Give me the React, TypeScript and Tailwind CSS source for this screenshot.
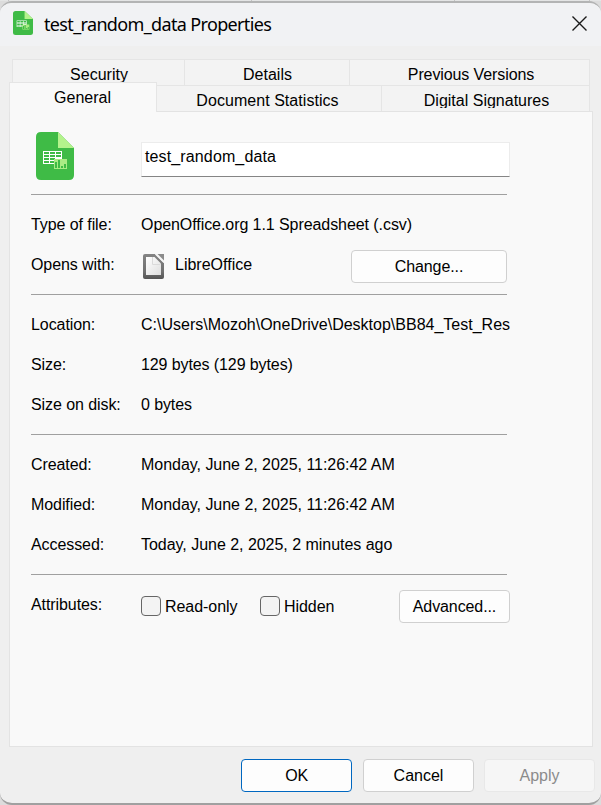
import type { ReactNode } from "react";

function SheetIcon({ className }: { className: string }) {
  return (
    <svg className={className} viewBox="0 0 38 48" preserveAspectRatio="none">
      <path d="M5 0H22L38 16V43Q38 48 33 48H5Q0 48 0 43V5Q0 0 5 0Z" fill="#3fbb46" />
      <path d="M22 0L38 16H22Z" fill="#b4f38c" />
      <path d="M7 19H26V32H7Z" fill="#fff" />
      <path
        d="M8 20h5v2h-5zM14 20h5v2h-5zM20 20h5v2h-5zM8 23h5v2h-5zM14 23h5v2h-5zM20 23h5v2h-5zM8 26h5v2h-5zM14 26h5v2h-5zM8 29h5v2h-5zM14 29h5v2h-5z"
        fill="#3fbb46"
      />
      <path d="M18 27H31V37H18Z" fill="#a9ec84" />
      <path d="M19 30h2v6h-2zM22 28h2v8h-2zM25 34h2v2h-2zM28 32h2v4h-2z" fill="#3fbb46" />
    </svg>
  );
}

function OfficeIcon() {
  return (
    <svg className="block h-[25px] w-[21px] shrink-0" viewBox="0 0 21 25">
      <defs>
        <linearGradient id="frame" x1="0" y1="0" x2="0" y2="1">
          <stop offset="0" stopColor="#858585" />
          <stop offset="0.7" stopColor="#707070" />
          <stop offset="1" stopColor="#545454" />
        </linearGradient>
        <linearGradient id="sheet" x1="0" y1="0" x2="1" y2="1">
          <stop offset="0" stopColor="#ffffff" />
          <stop offset="1" stopColor="#dedede" />
        </linearGradient>
      </defs>
      <path d="M2 0H12L21 9V23Q21 25 19 25H2Q0 25 0 23V2Q0 0 2 0Z" fill="url(#frame)" />
      <path d="M3 3H11.5L18 9.5V21H3Z" fill="url(#sheet)" />
      <path d="M9.5 3V10.5H17.5" fill="none" stroke="#dadada" strokeWidth="1" />
      <path d="M14.5 0H21V6.5Z" fill="#8b8b8b" />
      <path d="M12.5 0L21 8.5" stroke="#f3f3f3" strokeWidth="1.2" />
    </svg>
  );
}

function Tab({ label, className, textClass }: { label: string; className: string; textClass: string }) {
  return (
    <div className={`h-[26px] border-t border-[#e5e5e5] bg-[#f3f3f3] text-center ${className}`}>
      <div className={`h-[22px] overflow-hidden pt-[5px] leading-[19px] ${textClass}`}>{label}</div>
    </div>
  );
}

function Row({ label, children }: { label: string; children: ReactNode }) {
  return (
    <div className="flex h-10 items-center">
      <div className="w-[110px] shrink-0 tracking-[-0.08px]">{label}</div>
      {children}
    </div>
  );
}

function Section({ children }: { children: ReactNode }) {
  return (
    <div className="pb-[9px]">
      <div className="mb-[10px] h-px w-[476px] bg-[#a0a0a0]" />
      {children}
    </div>
  );
}

function Button({ label, className }: { label: string; className: string }) {
  return (
    <button className={`h-[33px] rounded-[4px] border text-center leading-[31px] ${className}`}>
      {label}
    </button>
  );
}

function Check({ label, className }: { label: string; className: string }) {
  return (
    <label className={`flex items-center gap-[4px] pt-[2px] ${className}`}>
      <span className="size-[20px] rounded-[4px] border border-[#666666] bg-[#f3f3f3]" />
      <span className="pt-[2px] tracking-[-0.05px]">{label}</span>
    </label>
  );
}

const dates = [
  ["Created:", "Monday, June 2, 2025, 11:26:42 AM"],
  ["Modified:", "Monday, June 2, 2025, 11:26:42 AM"],
  ["Accessed:", "Today, June 2, 2025, 2 minutes ago"],
];

export default function App() {
  return (
    <div className="h-[805px] w-[601px] overflow-hidden bg-[#dcdcdc] font-['Liberation_Sans',Arial,sans-serif] text-[16px] leading-5 text-black">
      <div className="flex h-px bg-[#e4e5e5] pl-[8px]">
        <div className="w-[244px] border-x border-[#c4c4c4]" />
        <div className="w-[203px] border-r border-[#c4c4c4]" />
        <div className="w-[135px] border-r border-[#c4c4c4]" />
      </div>
      <div className="h-[804px] overflow-hidden rounded-[12px] border-t-2 border-b-2 border-t-[#b3b4b4] border-b-[#a0a0a0] bg-[#efefef]">
        <header className="flex h-[43px] items-center bg-[#f1f2f4] pl-[13px] pr-[13px]">
          <SheetIcon className="mt-[-3px] h-[24px] w-[20px]" />
          <span className="ml-[11px] mt-[-2px] flex-1 font-['Noto_Sans','Segoe_UI',sans-serif] text-[18px] leading-6 tracking-[-0.65px]">
            test_random_data Properties
          </span>
          <svg className="mt-[-3px] size-[17px]" viewBox="0 0 17 17">
            <path d="M1.5 1.5L15.5 15.5M15.5 1.5L1.5 15.5" stroke="#1a1a1a" strokeWidth="1.4" />
          </svg>
        </header>

        <nav className="pt-[13px]">
          <div className="ml-[12px] flex">
            <Tab label="Security" className="w-[172px] border-l" textClass="pl-px" />
            <Tab label="Details" className="w-[165px] border-l" textClass="pl-px" />
            <Tab label="Previous Versions" className="w-[241px] border-x" textClass="pl-[3px] tracking-[-0.1px]" />
          </div>
          <div className="ml-[9px] flex h-[26px]">
            <div className="relative mt-[-3px] h-[30px] w-[148px] border border-b-0 border-[#e5e5e5] bg-[#f9f9f9] pt-[5px] pr-px text-center">
              General
            </div>
            <Tab label="Document Statistics" className="w-[224px]" textClass="pr-[3px] tracking-[0.05px]" />
            <Tab label="Digital Signatures" className="w-[209px] border-x" textClass="pl-[2px]" />
          </div>
        </nav>

        <main className="ml-[9px] h-[636px] w-[584px] border border-[#e3e3e3] bg-[#f9f9f9] pl-[21px]">
          <div className="flex h-[82px] pt-[20px]">
            <SheetIcon className="ml-[5px] h-[48px] w-[38px]" />
            <div className="ml-[67px] mt-[10px] h-[35px] w-[369px] border border-[#ececec] border-b-[#858585] bg-white pl-[3px] pt-[4px] tracking-[0.13px]">
              test_random_data
            </div>
          </div>

          <Section>
            <Row label="Type of file:">
              <span className="tracking-[-0.07px]">OpenOffice.org 1.1 Spreadsheet (.csv)</span>
            </Row>
            <Row label="Opens with:">
              <span className="ml-[2px] mt-[3px]"><OfficeIcon /></span>
              <span className="ml-[11px] w-[176px]">LibreOffice</span>
              <Button label="Change..." className="mt-[2px] w-[156px] border-[#d0d0d0] bg-[#fdfdfd] tracking-[-0.1px]" />
            </Row>
          </Section>

          <Section>
            <Row label="Location:">
              <span className="w-[369px] overflow-hidden whitespace-nowrap">
                C:\Users\Mozoh\OneDrive\Desktop\BB84_Test_Res
              </span>
            </Row>
            <Row label="Size:">
              <span className="tracking-[-0.1px]">129 bytes (129 bytes)</span>
            </Row>
            <Row label="Size on disk:">
              <span className="tracking-[-0.1px]">0 bytes</span>
            </Row>
          </Section>

          <Section>
            {dates.map(([label, value]) => (
              <Row key={label} label={label}>
                <span className="tracking-[-0.03px]">{value}</span>
              </Row>
            ))}
          </Section>

          <Section>
            <Row label="Attributes:">
              <Check label="Read-only" className="w-[119px]" />
              <Check label="Hidden" className="w-[139px]" />
              <Button label="Advanced..." className="mt-[2px] w-[111px] border-[#d0d0d0] bg-[#fdfdfd] tracking-[-0.1px]" />
            </Row>
          </Section>
        </main>

        <footer className="flex justify-end pr-[6px] pt-[12px]">
          <Button label="OK" className="mr-[11px] w-[111px] border-[#0067c0] bg-[#fdfdfd] tracking-[-0.3px]" />
          <Button label="Cancel" className="mr-[10px] w-[111px] border-[#d0d0d0] bg-[#fdfdfd]" />
          <Button label="Apply" className="w-[111px] border-[#e8e8e8] bg-[#f6f6f6] text-[#8b8b8b]" />
        </footer>
      </div>
    </div>
  );
}
